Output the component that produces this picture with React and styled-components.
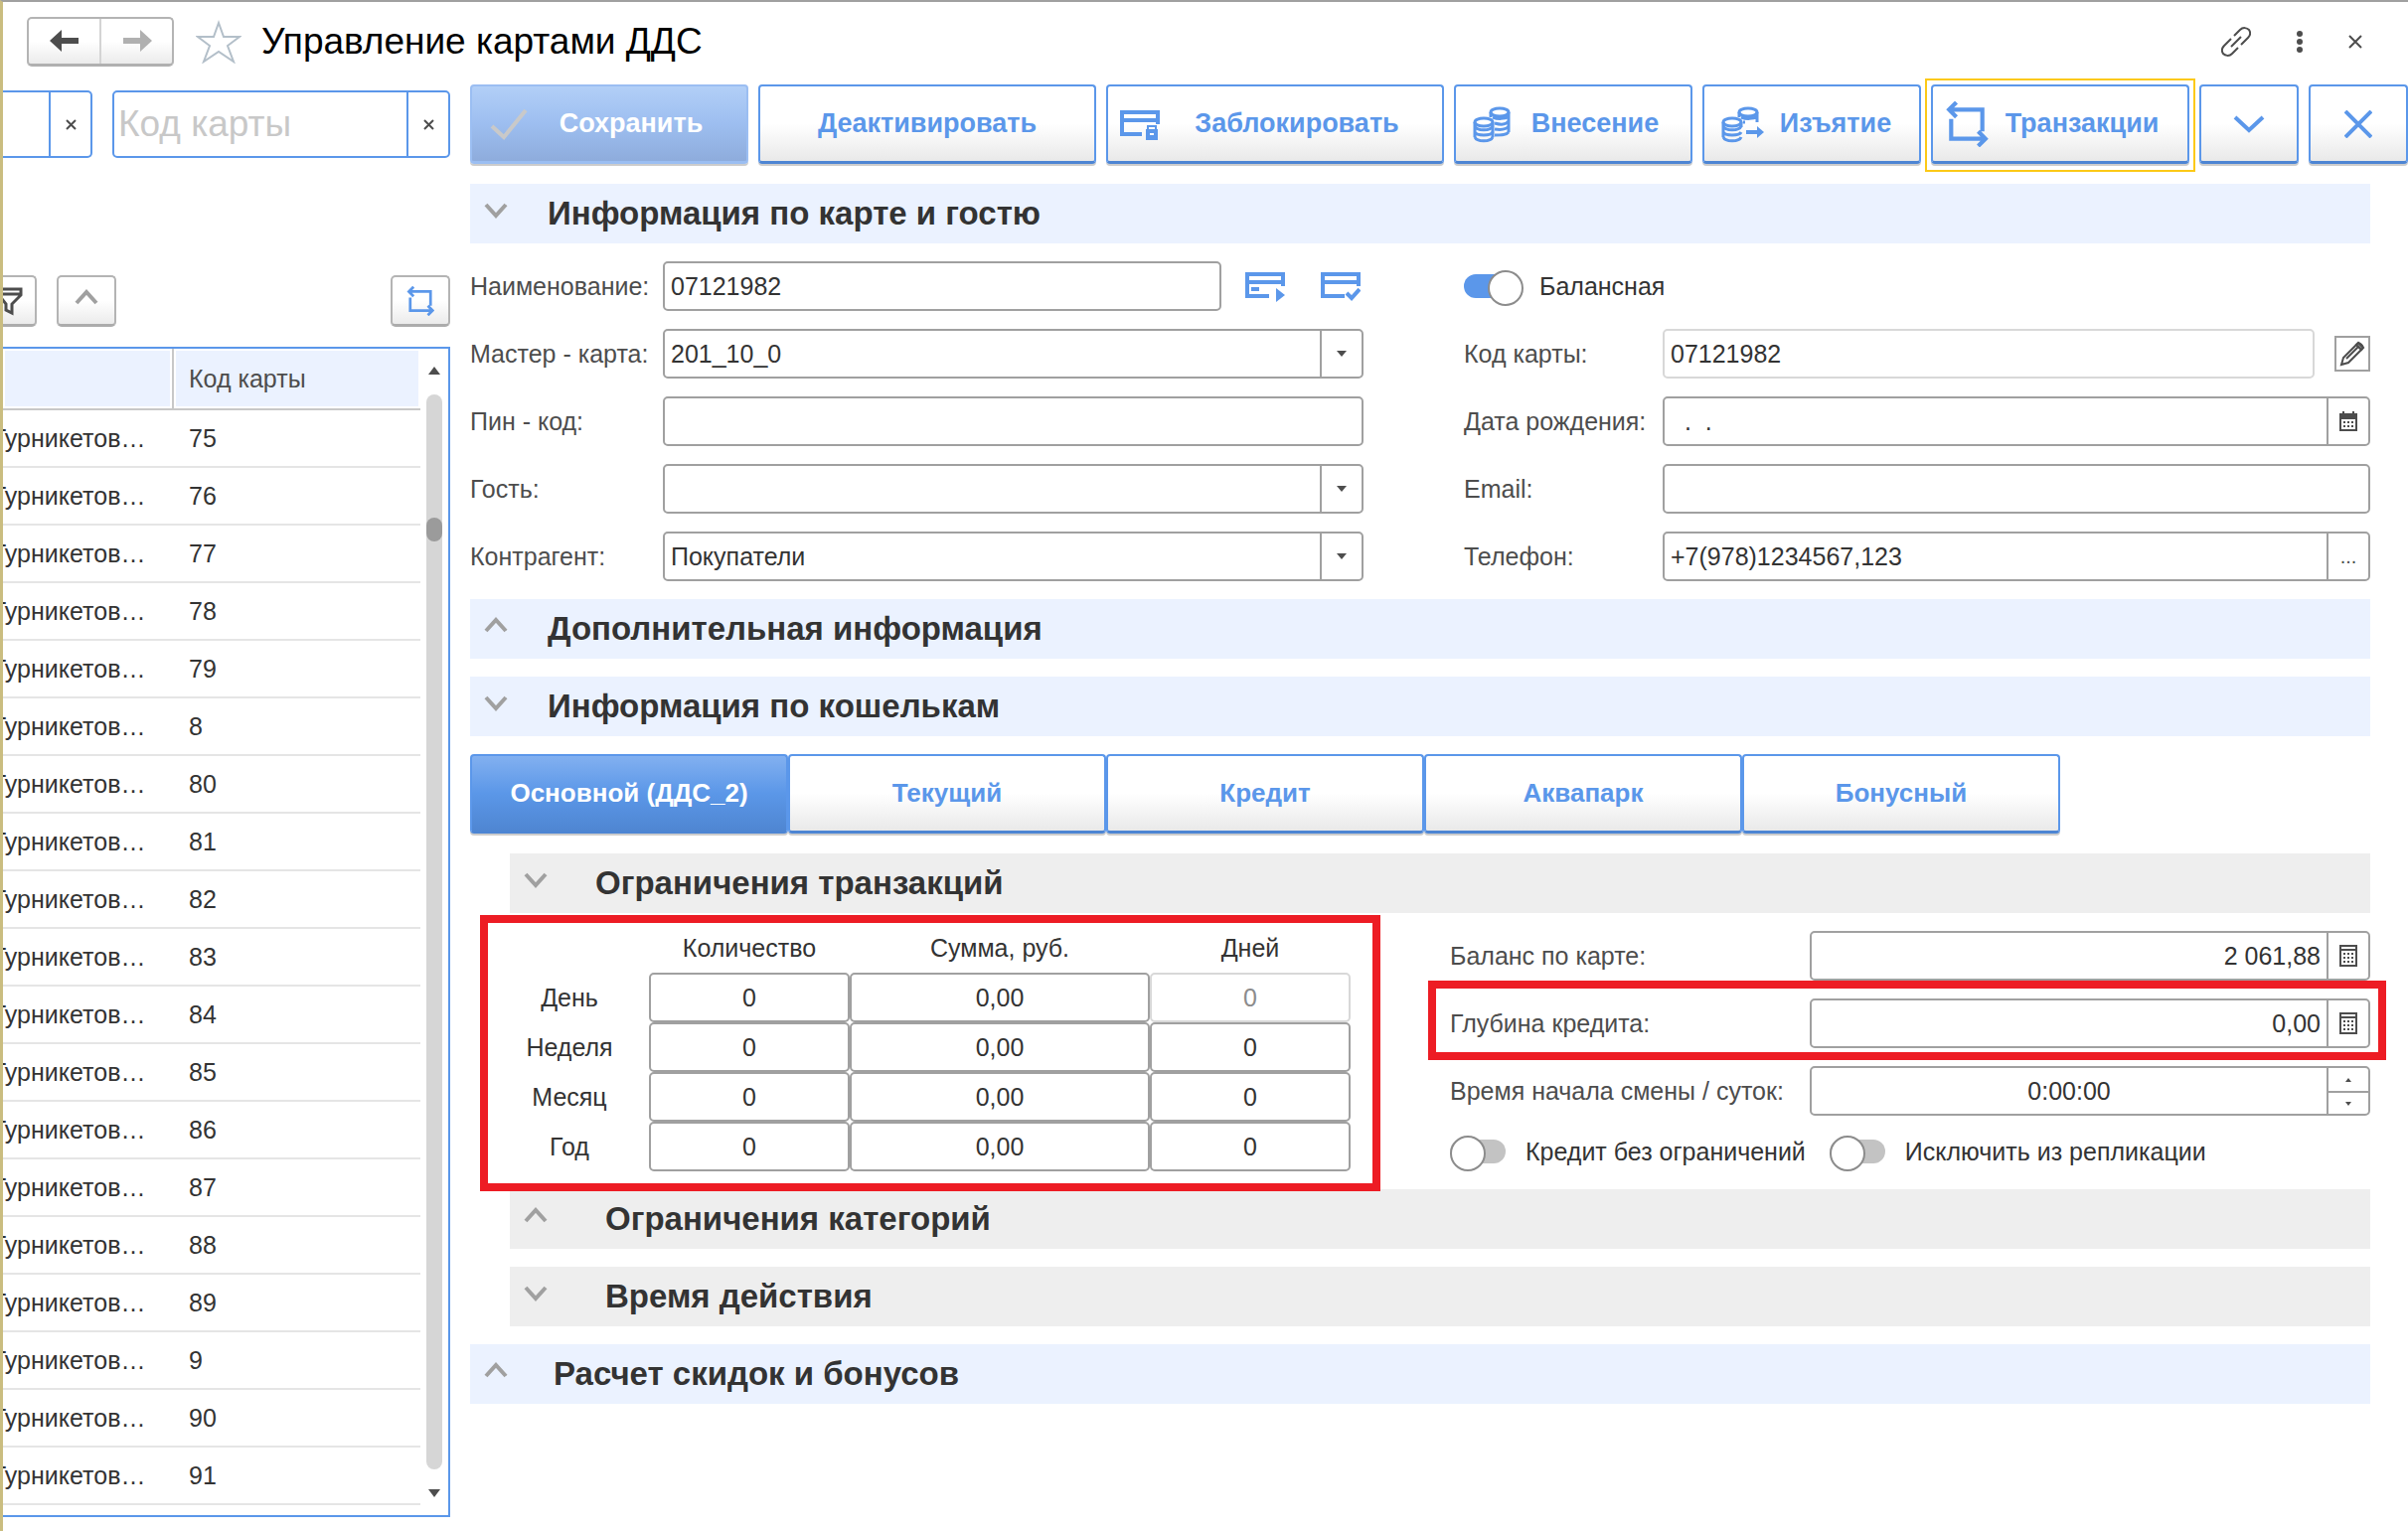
import React from 'react';
import styled, { createGlobalStyle, css } from 'styled-components';

const blue = '#5b97ea';
const gray = '#a0a0a0';
const red = '#ed1c24';

const GlobalStyle = createGlobalStyle`
  * { box-sizing: border-box; }
  body { margin: 0; background: #fff; }
  body, button, input, select {
    font-family: "Liberation Sans", Arial, sans-serif;
    font-size: 25px;
    color: #333;
  }
  button { cursor: pointer; }
  svg { display: block; flex: none; }
`;

// page
const Page = styled.div`
  min-height: 100vh;
  border-top: 2px solid ${gray};
  border-left: 3px solid #cabd80;
  overflow: hidden;
`;

const Header = styled.header`
  display: flex;
  align-items: center;
  height: 83px;
  padding: 0 46px 4px 24px;
`;

const NavGroup = styled.div`
  display: flex;
  width: 148px;
  height: 50px;
  border: 2px solid #b4b4b4;
  border-bottom: 3px solid #b0b0b0;
  border-radius: 5px;
  background: linear-gradient(#fff 50%, #ebebeb);
`;

const NavButton = styled.button`
  flex: 1;
  display: grid;
  place-items: center;
  padding: 0;
  border: 0;
  background: none;
  & + & { border-left: 2px solid #d4d4d4; }
`;

const Title = styled.h1`
  flex: 1;
  margin: 0 0 0 20px;
  font-size: 37px;
  font-weight: 400;
  color: #000;
`;

const PlainButton = styled.button`
  display: grid;
  place-items: center;
  padding: 0;
  border: 0;
  background: none;
`;

const StarButton = styled(PlainButton)`
  margin-left: 22px;
`;

const WindowButtons = styled.div`
  display: flex;
  align-items: center;
  gap: 46px;
`;

const Body = styled.div`
  display: flex;
  gap: 20px;
`;

// left list
const Sidebar = styled.aside`
  flex: none;
  width: 450px;
  padding-top: 6px;
`;

const SearchRow = styled.div`
  display: grid;
  grid-template-columns: 90px minmax(0, 1fr);
  gap: 20px;
`;

const SearchBox = styled.div`
  display: flex;
  height: 68px;
  border: 2px solid ${blue};
  border-radius: 5px;
  ${(p) => p.$cut && css`
    border-left: 0;
    border-radius: 0 5px 5px 0;
  `}
  input {
    flex: 1;
    min-width: 0;
    padding: 0 0 0 4px;
    border: 0;
    background: none;
    font-size: 37px;
    &::placeholder { color: #c8c8c8; }
  }
  button {
    flex: none;
    width: 42px;
    border-left: 2px solid ${blue};
  }
`;

const ListTools = styled.div`
  display: flex;
  align-items: center;
  gap: 20px;
  margin: 118px 0 20px;
`;

const ToolButton = styled.button`
  display: grid;
  place-items: center;
  width: ${(p) => (p.$cut ? '34px' : '60px')};
  height: 52px;
  padding: 0;
  border: 2px solid #b4b4b4;
  border-bottom: 3px solid #acacac;
  border-radius: 5px;
  background: linear-gradient(#fff 50%, #ebebeb);
  ${(p) => p.$cut && css`
    border-left: 0;
    border-radius: 0 5px 5px 0;
    justify-items: start;
  `}
  &:last-child { margin-left: auto; }
`;

const ListFrame = styled.div`
  display: flex;
  height: 1178px;
  border: 2px solid ${blue};
  border-left: 0;
`;

const CardTable = styled.table`
  flex: 1;
  align-self: flex-start;
  table-layout: fixed;
  border-collapse: separate;
  border-spacing: 0;
  th, td {
    overflow: hidden;
    padding: 0 0 0 15px;
    text-align: left;
    font-weight: 400;
    white-space: nowrap;
  }
  th {
    height: 62px;
    border-bottom: 2px solid #c8c8c8;
    background: #ebf2ff;
    box-shadow: inset 0 0 0 2px #fff;
    color: #4d4d4d;
  }
  th:first-child {
    width: 172px;
    border-right: 2px solid #c8c8c8;
  }
  td {
    height: 58px;
    border-bottom: 2px solid #e5e5e5;
  }
  td:first-child {
    padding-left: 0;
    text-indent: -12px;
  }
`;

const ScrollColumn = styled.div`
  display: flex;
  flex-direction: column;
  align-items: center;
  gap: 20px;
  width: 28px;
  padding: 18px 0;
`;

const ScrollTrack = styled.div`
  flex: 1;
  width: 16px;
  padding-top: 124px;
  border-radius: 8px;
  background: #d6d6d6;
`;

const ScrollThumb = styled.div`
  height: 24px;
  border-radius: 8px;
  background: #9b9b9b;
`;

// right side
const Main = styled.main`
  flex: 1;
  min-width: 0;
  display: flex;
  flex-direction: column;
  gap: 18px;
`;

const Toolbar = styled.div`
  display: flex;
  gap: 10px;
  margin-bottom: 2px;
`;

const ActionButton = styled.button`
  position: relative;
  flex: ${(p) => p.$w} ${(p) => p.$w} ${(p) => p.$w}px;
  display: flex;
  align-items: center;
  min-width: 0;
  height: 80px;
  padding: 0 12px;
  border: 2px solid ${blue};
  border-bottom: 3px solid #4d85d3;
  border-radius: 4px;
  background: linear-gradient(#fff 50%, #e9e9e9);
  box-shadow: 0 2px 0 #ccc;
  color: ${blue};
  font-size: 27px;
  font-weight: 700;
  span { flex: 1; }
  > svg:only-child { margin: 0 auto; }
  ${(p) => p.$muted && css`
    border-color: #9bbef2;
    background: linear-gradient(#b2cff7, #9dbef0 50%, #8eacdc);
    color: #fff;
  `}
  ${(p) => p.$focused && css`
    &::after {
      content: '';
      position: absolute;
      inset: -8px -8px -11px;
      border: 2px solid #fcc917;
    }
  `}
`;

const Section = styled.h2`
  display: flex;
  align-items: center;
  height: 60px;
  margin: 0 38px 0 ${(p) => (p.$inner ? '40px' : 0)};
  background: ${(p) => (p.$inner ? '#eee' : '#ebf2ff')};
`;

const SectionButton = styled.button`
  flex: 1;
  display: flex;
  align-items: center;
  gap: ${(p) => p.$gap}px;
  padding: 0 0 0 14px;
  border: 0;
  background: none;
  font-size: 33px;
  font-weight: 700;
  text-align: left;
`;

const FormGrid = styled.div`
  display: grid;
  grid-template-columns: 899fr 912fr;
  gap: 18px 101px;
  margin-right: 38px;
`;

const Row = styled.div`
  position: relative;
  display: flex;
  align-items: center;
  height: 50px;
`;

const Label = styled.label`
  flex: none;
  width: ${(p) => p.$w}px;
  color: #4d4d4d;
  white-space: nowrap;
`;

const Field = styled.div`
  flex: 1;
  display: flex;
  min-width: 0;
  height: 50px;
  border: 2px solid ${(p) => (p.$locked ? '#d8d8d8' : gray)};
  border-radius: 5px;
  input, select {
    flex: 1;
    min-width: 0;
    padding: 0 6px;
    border: 0;
    background: none;
    appearance: none;
    text-align: ${(p) => p.$align || 'left'};
  }
`;

const Addon = styled.button`
  flex: none;
  display: grid;
  place-items: center;
  width: 42px;
  padding: 0;
  border: 0;
  border-left: 2px solid ${gray};
  background: none;
  font-size: 20px;
  color: #4d4d4d;
`;

const Spinner = styled.div`
  flex: none;
  display: grid;
  grid-template-rows: 1fr 1fr;
  width: 42px;
  border-left: 2px solid ${gray};
  button + button { border-top: 2px solid ${gray}; }
`;

const CardButtons = styled.div`
  display: flex;
  gap: 36px;
  padding: 0 3px 0 24px;
`;

const EditButton = styled.button`
  display: grid;
  place-items: center;
  width: 36px;
  height: 36px;
  margin-left: 20px;
  padding: 0;
  border: 2px solid ${gray};
  background: #fff;
`;

const Toggle = styled.label`
  display: flex;
  align-items: center;
  gap: 20px;
  white-space: nowrap;
  input {
    position: relative;
    flex: none;
    width: 56px;
    height: 32px;
    margin: 0;
    appearance: none;
  }
  input::before {
    content: '';
    position: absolute;
    inset: 4px 0;
    border-radius: 12px;
    background: #c3c3c3;
  }
  input::after {
    content: '';
    position: absolute;
    top: 0;
    left: 0;
    width: 32px;
    height: 32px;
    border: 2px solid #8c8c8c;
    border-radius: 50%;
    background: #fff;
  }
  input:checked::before { background: ${blue}; }
  input:checked::after { left: 24px; }
`;

const ToggleRow = styled.div`
  display: flex;
  align-items: center;
  gap: 24px;
  height: 36px;
`;

const Tabs = styled.div`
  display: flex;
  margin: 0 350px 2px 0;
`;

const Tab = styled.button`
  flex: 1;
  height: 80px;
  padding: 0;
  border: 2px solid ${blue};
  border-bottom: 3px solid #4d85d3;
  border-radius: 4px;
  box-shadow: 0 2px 0 #ccc;
  font-size: 26px;
  font-weight: 700;
  color: ${(p) => (p.$active ? '#fff' : blue)};
  background: ${(p) => (p.$active
    ? 'linear-gradient(#82b0f0, #5b97e8 50%, #4f86d2)'
    : 'linear-gradient(#fff 50%, #e9e9e9)')};
`;

const LimitsBody = styled.div`
  display: grid;
  grid-template-columns: 866fr 926fr;
  gap: 100px;
  margin: 0 38px 0 20px;
`;

const LimitsPanel = styled.div`
  position: relative;
`;

const LimitsTable = styled.table`
  width: 100%;
  table-layout: fixed;
  border-spacing: 0;
  th, td {
    padding: 0;
    font-weight: 400;
  }
  thead th {
    height: 42px;
    padding-bottom: 8px;
  }
  th:nth-child(1) { width: 160px; }
  th:nth-child(2), th:nth-child(4) { width: 202px; }
  td { height: 50px; }
`;

const CellInput = styled.input`
  display: block;
  width: 100%;
  height: 50px;
  padding: 0;
  border: 2px solid ${gray};
  border-radius: 5px;
  background: #fff;
  text-align: center;
  &:disabled {
    border-color: #d8d8d8;
    color: #8c8c8c;
  }
`;

// red frame drawn over the block it marks
const Frame = styled.div`
  position: absolute;
  inset: ${(p) => p.$inset};
  z-index: 1;
  border: 8px solid ${red};
  pointer-events: none;
`;

const Fields = styled.div`
  display: flex;
  flex-direction: column;
  gap: 18px;
`;

// icons
const Stroke = ({ w, h, color = blue, width = 4, children, ...rest }) => (
  <svg width={w} height={h} viewBox={`0 0 ${w} ${h}`} fill="none" stroke={color} strokeWidth={width} {...rest}>
    {children}
  </svg>
);

const Chevron = ({ up }) => (
  <Stroke w={24} h={28} color={gray}>
    <path d={up ? 'M2 16 L12 5 L22 16' : 'M2 5 L12 16 L22 5'} />
  </Stroke>
);

const Arrow = ({ right }) => (
  <svg width="30" height="24" viewBox="0 0 30 24" fill={right ? '#b0b0b0' : '#4d4d4d'}>
    <path
      d="M0 12 L12 1 L12 9 L29 9 L29 15 L12 15 L12 23 Z"
      transform={right ? 'matrix(-1 0 0 1 30 0)' : undefined}
    />
  </svg>
);

const Triangle = ({ up, size = 10, height = 6 }) => (
  <svg width={size} height={height} viewBox="0 0 10 6" preserveAspectRatio="none" fill="#4d4d4d">
    <path d={up ? 'M0 6 L5 0 L10 6 Z' : 'M0 0 L10 0 L5 6 Z'} />
  </svg>
);

const Cross = ({ size, color = '#4d4d4d', width = 2 }) => (
  <Stroke w={size} h={size} color={color} width={width}>
    <path d={`M1 1 L${size - 1} ${size - 1} M${size - 1} 1 L1 ${size - 1}`} />
  </Stroke>
);

const Star = () => (
  <Stroke w={46} h={44} color="#b3bfc9" width={2}>
    <path d="M23 3 L28 17 L44 17 L32 26 L38 42 L23 32 L8 42 L14 26 L2 17 L18 17 Z" />
  </Stroke>
);

const LinkIcon = () => (
  <Stroke w={30} h={30} color="#4d4d4d" width={2}>
    <path d="M13 9 L19 3 C22 0 26 1 28 3 C30 6 29 9 27 11 L20 18 M17 21 L11 27 C8 30 4 29 2 27 C0 24 1 21 3 19 L10 12 M10 20 L20 10" />
  </Stroke>
);

const Dots = () => (
  <svg width="6" height="22" viewBox="0 0 6 22" fill="#4d4d4d">
    <circle cx="3" cy="3" r="3" />
    <circle cx="3" cy="11" r="3" />
    <circle cx="3" cy="19" r="3" />
  </svg>
);

const Funnel = () => (
  <Stroke w={22} h={30} color="#4d4d4d" width={3}>
    <path d="M0 3 L18 3 L18 9 L9 18 L9 27 L3 24 L3 18 L-4 9 M0 8 L18 8" />
  </Stroke>
);

const Exchange = ({ small }) => (
  <svg width={small ? 28 : 44} height={small ? 30 : 46} viewBox="0 0 40 44" fill="none" stroke={blue} strokeWidth="4">
    <path d="M4 8 H35 V29 M10 1 L3 8 L10 15 M5 17 V36 H37 M31 29 L38 36 L31 43" />
  </svg>
);

const Check = () => (
  <Stroke w={44} h={36} color="#c9c9c9">
    <path d="M8 20 L20 31 L42 4" />
  </Stroke>
);

const CardIcon = ({ kind }) => (
  <Stroke w={kind === 'lock' ? 44 : 40} h={32}>
    {kind === 'lock' ? (
      <>
        <path d="M22 26 H2 V4 H38 V16 M2 12 H38" />
        <rect x="26" y="21" width="12" height="11" fill={blue} stroke="none" />
        <path d="M28 22 V18 H36 V22" strokeWidth="2" />
        <path d="M30 26 H34" stroke="#fff" strokeWidth="2" />
      </>
    ) : (
      <path d="M24 26 H2 V4 H38 V16 M2 12 H38" />
    )}
    {kind === 'play' && (
      <>
        <rect x="6" y="17" width="8" height="4" fill={blue} stroke="none" />
        <path d="M31 18 L40 25 L31 32 Z" fill={blue} stroke="none" />
      </>
    )}
    {kind === 'check' && <path d="M26 23 L31 28 L39 19" />}
  </Stroke>
);

const Coins = ({ out }) => (
  <Stroke w={out ? 48 : 44} h={38} width={3}>
    <ellipse cx="32" cy="7" rx="9" ry="4" />
    {out ? (
      <path d="M23 7 V12 M41 7 V17 M25 12 C30 14 37 14 41 11 M27 17 H29" />
    ) : (
      <path d="M23 7 V12 M41 7 V27 M25 12 C30 14 37 14 41 11 M27 18 C34 20 39 19 41 16 M27 24 C34 25 39 24 41 21 M27 30 C34 30 39 30 41 27" />
    )}
    <ellipse cx="16" cy="17" rx="9" ry="4" />
    <path d="M7 17 V32 M7 21 C9 26 23 26 25 21 M7 27 C9 31 23 31 25 27 M7 32 C9 37 23 37 25 32" />
    <path d={out ? 'M25 17 V22' : 'M25 17 V32'} />
    {out && (
      <>
        <path d="M30 27 H44" strokeWidth="4" />
        <path d="M41 21 L48 27 L41 33 Z" fill={blue} stroke="none" />
      </>
    )}
  </Stroke>
);

const Calendar = () => (
  <svg width="20" height="20" viewBox="0 0 20 20" fill="#4d4d4d">
    <path d="M1 2 H4 V0 H6 V2 H14 V0 H16 V2 H19 V20 H1 Z M3 8 V18 H17 V8 Z" fillRule="evenodd" />
    <path d="M5 10h2v2H5z M9 10h2v2H9z M13 10h2v2h-2z M5 14h2v2H5z M9 14h2v2H9z M13 14h2v2h-2z" />
  </svg>
);

const Calculator = () => (
  <svg width="18" height="22" viewBox="0 0 18 22" fill="#4d4d4d">
    <path d="M0 0 H18 V22 H0 Z M2 2 V4 H16 V2 Z M2 6 V20 H16 V6 Z" fillRule="evenodd" />
    <path d="M4 8h2v2H4z M8 8h2v2H8z M12 8h2v2h-2z M4 12h2v2H4z M8 12h2v2H8z M12 12h2v2h-2z M4 16h2v2H4z M8 16h2v2H8z M12 16h2v2h-2z" />
  </svg>
);

const Pencil = () => (
  <Stroke w={26} h={26} color="#4d4d4d" width={2}>
    <path d="M2 24 L4 17 L18 3 C20 1 25 5 23 8 L9 22 Z M7 18 L19 6" />
    <path d="M17 4 L19 2 L24 7 L22 9 Z" fill="#8c8c8c" />
  </Stroke>
);

const codes = ['75', '76', '77', '78', '79', '8', '80', '81', '82', '83', '84', '85', '86', '87', '88', '89', '9', '90', '91'];
const wallets = ['Основной (ДДС_2)', 'Текущий', 'Кредит', 'Аквапарк', 'Бонусный'];
const periods = ['День', 'Неделя', 'Месяц', 'Год'];

const SectionTitle = ({ up, inner, gap = 40, children }) => (
  <Section $inner={inner}>
    <SectionButton type="button" $gap={gap} aria-expanded={!up}>
      <Chevron up={up} />
      {children}
    </SectionButton>
  </Section>
);

const SelectRow = ({ id, label, value }) => (
  <Row>
    <Label htmlFor={id} $w={194}>{label}</Label>
    <Field>
      <select id={id} defaultValue={value}>
        <option>{value}</option>
      </select>
      <Addon type="button" aria-label="Выбрать"><Triangle /></Addon>
    </Field>
  </Row>
);

const App = () => {
  return (
    <Page>
      <GlobalStyle />
      <Header>
        <NavGroup>
          <NavButton type="button" aria-label="Назад"><Arrow /></NavButton>
          <NavButton type="button" aria-label="Вперед"><Arrow right /></NavButton>
        </NavGroup>
        <StarButton type="button" aria-label="В избранное"><Star /></StarButton>
        <Title>Управление картами ДДС</Title>
        <WindowButtons>
          <PlainButton type="button" aria-label="Ссылка"><LinkIcon /></PlainButton>
          <PlainButton type="button" aria-label="Еще"><Dots /></PlainButton>
          <PlainButton type="button" aria-label="Закрыть"><Cross size={14} /></PlainButton>
        </WindowButtons>
      </Header>

      <Body>
        <Sidebar>
          <SearchRow>
            <SearchBox $cut>
              <input aria-label="Поиск" />
              <PlainButton type="button" aria-label="Очистить"><Cross size={11} /></PlainButton>
            </SearchBox>
            <SearchBox>
              <input aria-label="Код карты" placeholder="Код карты" />
              <PlainButton type="button" aria-label="Очистить"><Cross size={11} /></PlainButton>
            </SearchBox>
          </SearchRow>
          <ListTools>
            <ToolButton type="button" $cut aria-label="Фильтр"><Funnel /></ToolButton>
            <ToolButton type="button" aria-label="Свернуть"><Chevron up /></ToolButton>
            <ToolButton type="button" aria-label="Обновить"><Exchange small /></ToolButton>
          </ListTools>
          <ListFrame>
            <CardTable>
              <thead>
                <tr>
                  <th aria-label="Наименование" />
                  <th>Код карты</th>
                </tr>
              </thead>
              <tbody>
                {codes.map((code) => (
                  <tr key={code}>
                    <td>Турникетов…</td>
                    <td>{code}</td>
                  </tr>
                ))}
              </tbody>
            </CardTable>
            <ScrollColumn>
              <PlainButton type="button" aria-label="Вверх"><Triangle up size={12} height={8} /></PlainButton>
              <ScrollTrack><ScrollThumb /></ScrollTrack>
              <PlainButton type="button" aria-label="Вниз"><Triangle size={12} height={8} /></PlainButton>
            </ScrollColumn>
          </ListFrame>
        </Sidebar>

        <Main>
          <Toolbar>
            <ActionButton type="button" $w={280} $muted><Check /><span>Сохранить</span></ActionButton>
            <ActionButton type="button" $w={340}><span>Деактивировать</span></ActionButton>
            <ActionButton type="button" $w={340}><CardIcon kind="lock" /><span>Заблокировать</span></ActionButton>
            <ActionButton type="button" $w={240}><Coins /><span>Внесение</span></ActionButton>
            <ActionButton type="button" $w={220}><Coins out /><span>Изъятие</span></ActionButton>
            <ActionButton type="button" $w={260} $focused><Exchange /><span>Транзакции</span></ActionButton>
            <ActionButton type="button" $w={100} aria-label="Еще">
              <Stroke w={32} h={20}><path d="M2 3 L16 16 L30 3" /></Stroke>
            </ActionButton>
            <ActionButton type="button" $w={100} aria-label="Закрыть"><Cross size={28} color={blue} width={4} /></ActionButton>
          </Toolbar>

          <SectionTitle>Информация по карте и гостю</SectionTitle>
          <FormGrid>
            <Row>
              <Label htmlFor="name" $w={194}>Наименование:</Label>
              <Field><input id="name" defaultValue="07121982" /></Field>
              <CardButtons>
                <PlainButton type="button" aria-label="Выдать карту"><CardIcon kind="play" /></PlainButton>
                <PlainButton type="button" aria-label="Проверить карту"><CardIcon kind="check" /></PlainButton>
              </CardButtons>
            </Row>
            <Row>
              <Toggle>
                <input type="checkbox" defaultChecked />
                Балансная
              </Toggle>
            </Row>
            <SelectRow id="master" label="Мастер - карта:" value="201_10_0" />
            <Row>
              <Label htmlFor="code" $w={200}>Код карты:</Label>
              <Field $locked><input id="code" readOnly value="07121982" /></Field>
              <EditButton type="button" aria-label="Изменить"><Pencil /></EditButton>
            </Row>
            <Row>
              <Label htmlFor="pin" $w={194}>Пин - код:</Label>
              <Field><input id="pin" /></Field>
            </Row>
            <Row>
              <Label htmlFor="birth" $w={200}>Дата рождения:</Label>
              <Field>
                <input id="birth" defaultValue="  .  ." />
                <Addon type="button" aria-label="Календарь"><Calendar /></Addon>
              </Field>
            </Row>
            <SelectRow id="guest" label="Гость:" value="" />
            <Row>
              <Label htmlFor="email" $w={200}>Email:</Label>
              <Field><input id="email" /></Field>
            </Row>
            <SelectRow id="partner" label="Контрагент:" value="Покупатели" />
            <Row>
              <Label htmlFor="phone" $w={200}>Телефон:</Label>
              <Field>
                <input id="phone" defaultValue="+7(978)1234567,123" />
                <Addon type="button">...</Addon>
              </Field>
            </Row>
          </FormGrid>

          <SectionTitle up>Дополнительная информация</SectionTitle>
          <SectionTitle>Информация по кошелькам</SectionTitle>
          <Tabs>
            {wallets.map((wallet, i) => (
              <Tab key={wallet} type="button" $active={i === 0}>{wallet}</Tab>
            ))}
          </Tabs>

          <SectionTitle inner gap={48}>Ограничения транзакций</SectionTitle>
          <LimitsBody>
            <LimitsPanel>
              <LimitsTable>
                <thead>
                  <tr>
                    <th aria-label="Период" />
                    <th>Количество</th>
                    <th>Сумма, руб.</th>
                    <th>Дней</th>
                  </tr>
                </thead>
                <tbody>
                  {periods.map((period, i) => (
                    <tr key={period}>
                      <th scope="row">{period}</th>
                      <td><CellInput aria-label={`${period}: количество`} defaultValue="0" /></td>
                      <td><CellInput aria-label={`${period}: сумма`} defaultValue="0,00" /></td>
                      <td><CellInput aria-label={`${period}: дней`} defaultValue="0" disabled={i === 0} /></td>
                    </tr>
                  ))}
                </tbody>
              </LimitsTable>
              <Frame $inset="-16px -30px -20px -10px" />
            </LimitsPanel>
            <Fields>
              <Row>
                <Label htmlFor="balance" $w={362}>Баланс по карте:</Label>
                <Field $align="right">
                  <input id="balance" defaultValue="2 061,88" />
                  <Addon type="button" aria-label="Калькулятор"><Calculator /></Addon>
                </Field>
              </Row>
              <Row>
                <Label htmlFor="credit" $w={362}>Глубина кредита:</Label>
                <Field $align="right">
                  <input id="credit" defaultValue="0,00" />
                  <Addon type="button" aria-label="Калькулятор"><Calculator /></Addon>
                </Field>
                <Frame $inset="-18px -16px -12px -22px" />
              </Row>
              <Row>
                <Label htmlFor="start" $w={362}>Время начала смены / суток:</Label>
                <Field $align="center">
                  <input id="start" defaultValue="0:00:00" />
                  <Spinner>
                    <PlainButton type="button" aria-label="Больше"><Triangle up size={6} height={4} /></PlainButton>
                    <PlainButton type="button" aria-label="Меньше"><Triangle size={6} height={4} /></PlainButton>
                  </Spinner>
                </Field>
              </Row>
              <ToggleRow>
                <Toggle>
                  <input type="checkbox" />
                  Кредит без ограничений
                </Toggle>
                <Toggle>
                  <input type="checkbox" />
                  Исключить из репликации
                </Toggle>
              </ToggleRow>
            </Fields>
          </LimitsBody>

          <SectionTitle up inner gap={58}>Ограничения категорий</SectionTitle>
          <SectionTitle inner gap={58}>Время действия</SectionTitle>
          <SectionTitle up gap={46}>Расчет скидок и бонусов</SectionTitle>
        </Main>
      </Body>
    </Page>
  );
};

export default App;
